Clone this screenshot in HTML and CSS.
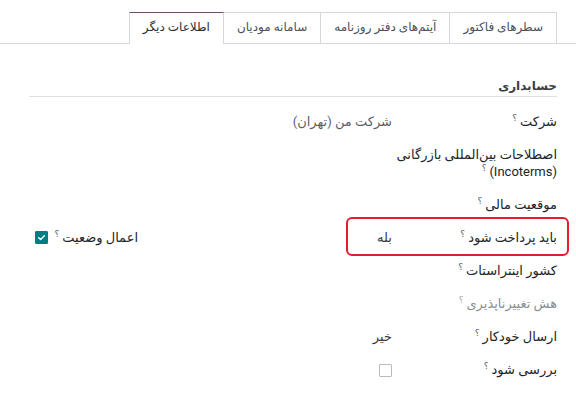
FILE: index.html
```html
<!DOCTYPE html>
<html lang="fa" dir="rtl">
<head>
<meta charset="utf-8">
<title>اطلاعات دیگر</title>
<link rel="stylesheet" href="styles.css">
</head>
<body>
<div class="tabs">
  <div class="tab">سطرهای فاکتور</div>
  <div class="tab">آیتم‌های دفتر روزنامه</div>
  <div class="tab">سامانه مودیان</div>
  <div class="tab active">اطلاعات دیگر</div>
</div>
<div class="sheet">
  <div class="section-title">حسابداری</div>
  <div class="fields">
    <div class="field">
      <div class="label">شرکت<sup>؟</sup></div>
      <div class="value soft">شرکت من (تهران)</div>
    </div>
    <div class="field">
      <div class="label">اصطلاحات بین‌المللی بازرگانی<br>(Incoterms)<sup>؟</sup></div>
      <div class="value"></div>
    </div>
    <div class="field">
      <div class="label">موقعیت مالی<sup>؟</sup></div>
      <div class="value"></div>
    </div>
    <div class="field">
      <div class="pay">
        <div class="label">باید پرداخت شود<sup>؟</sup></div>
        <div class="value">بله</div>
        <span class="highlight"></span>
      </div>
      <div class="extra">
        <div class="extra-label">اعمال وضعیت<sup>؟</sup></div>
        <span class="check checked"><svg viewBox="0 0 12 12" width="9" height="9"><path d="M2.2 6.3 L4.8 8.6 L9.8 3.6" fill="none" stroke="#fff" stroke-width="2" stroke-linecap="round" stroke-linejoin="round"/></svg></span>
      </div>
    </div>
    <div class="field">
      <div class="label">کشور اینتراستات<sup>؟</sup></div>
      <div class="value"></div>
    </div>
    <div class="field">
      <div class="label muted">هش تغییرناپذیری<sup>؟</sup></div>
      <div class="value"></div>
    </div>
    <div class="field">
      <div class="label">ارسال خودکار<sup>؟</sup></div>
      <div class="value">خیر</div>
    </div>
    <div class="field">
      <div class="label">بررسی شود<sup>؟</sup></div>
      <div class="value"><span class="check"></span></div>
    </div>
  </div>
</div>
</body>
</html>
```
FILE: styles.css
```css
html, body {
  margin: 0;
  padding: 0;
  background: #fff;
}
body {
  direction: rtl;
  font-family: Roboto, "DejaVu Sans", sans-serif;
  font-size: 13px;
  color: #212529;
}
.tabs {
  display: flex;
  align-items: flex-end;
  margin-top: 11px;
  padding-right: 19px;
  border-bottom: 1px solid #d6d8db;
  height: 32px;
}
.tab {
  height: 31px;
  line-height: 29px;
  padding: 0 13px;
  font-size: 12px;
  border: 1px solid #d6d8db;
  border-bottom: none;
  margin-left: -1px;
  box-sizing: border-box;
  color: #495057;
  white-space: nowrap;
}
.tab.active {
  height: 32px;
  margin-bottom: -1px;
  background: #fff;
  border-top-color: #714b67;
  color: #2b2f33;
  position: relative;
}
.sheet {
  padding: 0 19px 0 29px;
}
.section-title {
  margin-top: 34px;
  line-height: 17px;
  padding-bottom: 1px;
  border-bottom: 1px solid #dee2e6;
  font-size: 12px;
  font-weight: bold;
  color: #3a3f44;
}
.fields {
  margin-top: 8px;
}
.field {
  display: flex;
  align-items: flex-start;
  line-height: 17px;
}
.label, .value {
  padding: 8px 0;
  white-space: nowrap;
}
.label {
  width: 157px;
  padding-left: 8px;
  color: #212529;
}
.label.muted {
  color: #8a8f94;
}
.value {
  width: 99px;
  color: #343a40;
}
.value.soft {
  color: #5a6168;
}
sup {
  font-size: 9px;
  line-height: 0;
  margin-right: 3px;
  color: #5a6168;
  vertical-align: 5px;
}
.label.muted sup {
  color: #a0a4a8;
}
.pay {
  display: flex;
  position: relative;
  width: 264px;
}
.highlight {
  position: absolute;
  top: -4px;
  bottom: -2px;
  right: -12px;
  left: 53px;
  border: 2px solid #e11d2e;
  border-radius: 6px;
  pointer-events: none;
}
.extra {
  flex: 1;
  display: flex;
  align-items: center;
  padding: 8px 155px 8px 6px;
  white-space: nowrap;
}
.extra-label {
  color: #212529;
}
.check {
  display: inline-flex;
  align-items: center;
  justify-content: center;
  width: 13px;
  height: 13px;
  box-sizing: border-box;
  border: 1px solid #b8bcc0;
  border-radius: 1px;
  vertical-align: middle;
}
.extra .check {
  margin-right: auto;
}
.check.checked {
  background: #017e84;
  border-color: #017e84;
}
```
